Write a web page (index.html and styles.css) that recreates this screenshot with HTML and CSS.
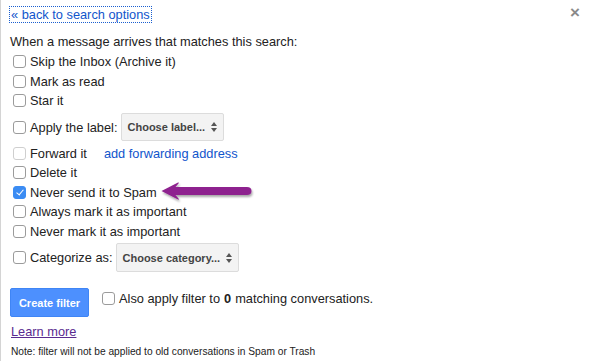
FILE: index.html
```html
<!DOCTYPE html>
<html>
<head>
<meta charset="utf-8">
<link rel="stylesheet" href="styles.css">
</head>
<body>
<div class="panel">
  <div class="top">
    <a class="back" href="#">« back to search options</a>
    <span class="close">×</span>
  </div>
  <div class="heading">When a message arrives that matches this search:</div>
  <div class="row"><input type="checkbox" class="cb"><span>Skip the Inbox (Archive it)</span></div>
  <div class="row"><input type="checkbox" class="cb"><span>Mark as read</span></div>
  <div class="row"><input type="checkbox" class="cb"><span>Star it</span></div>
  <div class="row tall"><input type="checkbox" class="cb"><span>Apply the label:</span>
    <span class="select sel-label"><span class="sel-text">Choose label...</span><span class="updown"><i class="up"></i><i class="down"></i></span></span>
  </div>
  <div class="row"><input type="checkbox" class="cb disabled"><span>Forward it</span><a class="fwd" href="#">add forwarding address</a></div>
  <div class="row"><input type="checkbox" class="cb"><span>Delete it</span></div>
  <div class="row arrow-row"><input type="checkbox" class="cb" checked><span>Never send it to Spam</span>
    <svg class="arrow" width="100" height="26" viewBox="0 0 100 26">
      <defs>
        <filter id="sh" x="-10%" y="-30%" width="120%" height="160%">
          <feGaussianBlur in="SourceAlpha" stdDeviation="1"/>
          <feOffset dx="1" dy="1.5"/>
          <feComponentTransfer><feFuncA type="linear" slope="0.35"/></feComponentTransfer>
          <feMerge><feMergeNode/><feMergeNode in="SourceGraphic"/></feMerge>
        </filter>
      </defs>
      <path filter="url(#sh)" fill="#8e248f" d="M1.5 11 L18 2.5 Q19.5 2 18.5 3.5 L15.5 7 L87 7 Q91.5 7 91.5 11 Q91.5 15 87 15 L15.5 15 L18.5 18.5 Q19.5 20 18 19.5 Z"/>
    </svg>
  </div>
  <div class="row"><input type="checkbox" class="cb"><span>Always mark it as important</span></div>
  <div class="row"><input type="checkbox" class="cb"><span>Never mark it as important</span></div>
  <div class="row tall"><input type="checkbox" class="cb"><span>Categorize as:</span>
    <span class="select sel-cat"><span class="sel-text">Choose category...</span><span class="updown"><i class="up"></i><i class="down"></i></span></span>
  </div>
  <div class="actions">
    <button class="create">Create filter</button>
    <label class="also"><input type="checkbox" class="cb">Also apply filter to <b>0</b> matching conversations.</label>
  </div>
  <a class="learn" href="#">Learn more</a>
  <div class="note">Note: filter will not be applied to old conversations in Spam or Trash</div>
</div>
</body>
</html>
```
FILE: styles.css
```css
html, body {
  margin: 0;
  padding: 0;
  background: #fff;
}
body {
  font-family: "Liberation Sans", Arial, sans-serif;
  font-size: 12.8px;
  color: #222;
}
.panel {
  border-left: 1px solid #d4d4d4;
  height: 361px;
  box-sizing: border-box;
  padding: 6px 0 0 9px;
  position: relative;
}
.top {
  display: flex;
  justify-content: space-between;
  align-items: center;
  height: 17px;
}
.back {
  color: #1155cc;
  text-decoration: none;
  outline: 1px dotted #1a5fd0;
  outline-offset: 0;
  line-height: 15px;
  padding: 0 1px;
}
.close {
  color: #8a8a8a;
  font-size: 17px;
  font-weight: bold;
  margin-right: 9px;
  margin-top: -4px;
  line-height: 15px;
}
.heading {
  height: 21px;
  line-height: 21px;
  margin-top: 8px;
}
.row {
  display: flex;
  align-items: center;
  height: 19.5px;
  position: relative;
}
.row.tall {
  height: 33px;
}
.cb {
  -webkit-appearance: none;
  appearance: none;
  width: 13px;
  height: 13px;
  border: 1px solid #9b9b9b;
  border-radius: 3px;
  margin: 0 4px 0 3px;
  box-sizing: border-box;
  background: #fff;
  flex: none;
  position: relative;
}
.cb.disabled {
  border-color: #cfcfcf;
}
.cb:checked {
  background: #3b8cf3;
  border-color: #3b8cf3;
}
.cb:checked::after {
  content: "";
  position: absolute;
  left: 3.5px;
  top: 1px;
  width: 3px;
  height: 6px;
  border: solid #fff;
  border-width: 0 1.6px 1.6px 0;
  transform: rotate(40deg);
}
.select {
  display: inline-flex;
  align-items: center;
  justify-content: space-between;
  box-sizing: border-box;
  background: #f3f3f3;
  border: 1px solid #dcdcdc;
  border-radius: 2px;
  font-size: 11px;
  font-weight: bold;
  color: #444;
  padding: 0 6px 0 6px;
  white-space: nowrap;
}
.sel-label {
  margin-left: 3px;
  width: 103px;
  height: 28px;
}
.sel-cat {
  margin-left: 3px;
  width: 123px;
  height: 29px;
}
.updown {
  display: inline-flex;
  flex-direction: column;
  gap: 2px;
}
.up, .down {
  display: block;
  width: 0;
  height: 0;
  border-left: 3.5px solid transparent;
  border-right: 3.5px solid transparent;
}
.up { border-bottom: 4px solid #555; }
.down { border-top: 4px solid #555; }
.fwd {
  color: #1155cc;
  text-decoration: none;
  margin-left: 17px;
}
.arrow {
  position: absolute;
  left: 150px;
  top: -3px;
}
.actions {
  display: flex;
  align-items: center;
  margin-top: 14px;
  height: 29px;
}
.create {
  background: #4d90fe;
  border: 1px solid #3f85f5;
  border-radius: 2px;
  color: #fff;
  font-family: "Liberation Sans", Arial, sans-serif;
  font-size: 11px;
  font-weight: bold;
  height: 29px;
  width: 79px;
  padding: 0;
}
.also {
  display: flex;
  align-items: center;
  margin-left: 13px;
  margin-top: -8px;
}
.also .cb {
  margin: 0 4px 0 0;
}
.also b {
  margin: 0 4px;
}
.learn {
  display: block;
  width: max-content;
  color: #5a2b8f;
  text-decoration: underline;
  margin-top: 7px;
  line-height: 16px;
  margin-left: 1px;
}
.note {
  font-size: 10.2px;
  line-height: 13px;
  margin-top: 5px;
  margin-left: 1px;
}
```
